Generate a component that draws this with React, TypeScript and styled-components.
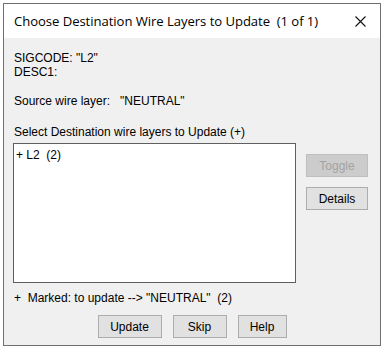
import React from "react";
import styled, { createGlobalStyle } from "styled-components";

const Global = createGlobalStyle`
  html, body { margin: 0; padding: 0; background: #ffffff; }
  #root { width: 383px; height: 349px; }
`;

const Dialog = styled.div`
  box-sizing: border-box;
  margin: 3px 0 0 3px;
  width: 378px;
  height: 343px;
  border: 1px solid #6f6f6f;
  display: flex;
  flex-direction: column;
  background: #f0f0f0;
  font-family: "Liberation Sans", Arial, sans-serif;
  font-size: 12px;
  color: #000;
`;

const TitleBar = styled.div`
  height: 34px;
  flex: none;
  background: #ffffff;
  display: flex;
  align-items: center;
  justify-content: space-between;
  padding: 0 14px 0 10px;
`;

const TitleText = styled.span`
  font-family: "Open Sans", "Noto Sans", sans-serif;
  font-size: 13.1px;
  color: #000;
  white-space: pre;
  letter-spacing: -0.05px;
`;

const Body = styled.div`
  flex: 1;
  display: flex;
  flex-direction: column;
  padding: 13px 0 0 10px;
`;

const Line = styled.div<{ $gap?: number }>`
  height: 14px;
  line-height: 14px;
  white-space: pre;
  margin-top: ${(p) => p.$gap ?? 0}px;
`;

const ListRow = styled.div`
  display: flex;
  margin-top: 4px;
  margin-left: -1px;
`;

const ListBox = styled.div`
  box-sizing: border-box;
  width: 283px;
  height: 140px;
  background: #ffffff;
  border: 1px solid #5f5f5f;
  padding: 4px 0 0 2px;
`;

const ListItem = styled.div`
  height: 14px;
  line-height: 14px;
  white-space: pre;
`;

const SideButtons = styled.div`
  display: flex;
  flex-direction: column;
  gap: 10px;
  padding: 11px 0 0 10px;
`;

const Button = styled.button<{ $w: number }>`
  box-sizing: border-box;
  width: ${(p) => p.$w}px;
  height: 23px;
  background: #e1e1e1;
  border: 1px solid #adadad;
  border-radius: 0;
  padding: 0;
  font-family: "Liberation Sans", Arial, sans-serif;
  font-size: 12px;
  color: #000;
  &:disabled {
    background: #cccccc;
    border-color: #bfbfbf;
    color: #a3a3a3;
  }
`;

const BottomRow = styled.div`
  display: flex;
  justify-content: center;
  gap: 11px;
  margin-top: 10px;
  margin-left: -10px;
`;

export default function App() {
  return (
    <>
      <Global />
      <Dialog>
        <TitleBar>
          <TitleText>Choose Destination Wire Layers to Update  (1 of 1)</TitleText>
          <svg width="11" height="11" viewBox="0 0 11 11">
            <path d="M0.5 0.5 L10.5 10.5 M10.5 0.5 L0.5 10.5" stroke="#111" strokeWidth="1.1" fill="none" />
          </svg>
        </TitleBar>
        <Body>
          <Line>SIGCODE: "L2"</Line>
          <Line>DESC1:</Line>
          <Line $gap={15}>Source wire layer:   "NEUTRAL"</Line>
          <Line $gap={17}>Select Destination wire layers to Update (+)</Line>
          <ListRow>
            <ListBox>
              <ListItem>+ L2  (2)</ListItem>
            </ListBox>
            <SideButtons>
              <Button $w={62} disabled>Toggle</Button>
              <Button $w={62}>Details</Button>
            </SideButtons>
          </ListRow>
          <Line $gap={8}>+  Marked: to update --&gt; "NEUTRAL"  (2)</Line>
          <BottomRow>
            <Button $w={64}>Update</Button>
            <Button $w={54}>Skip</Button>
            <Button $w={49}>Help</Button>
          </BottomRow>
        </Body>
      </Dialog>
    </>
  );
}
